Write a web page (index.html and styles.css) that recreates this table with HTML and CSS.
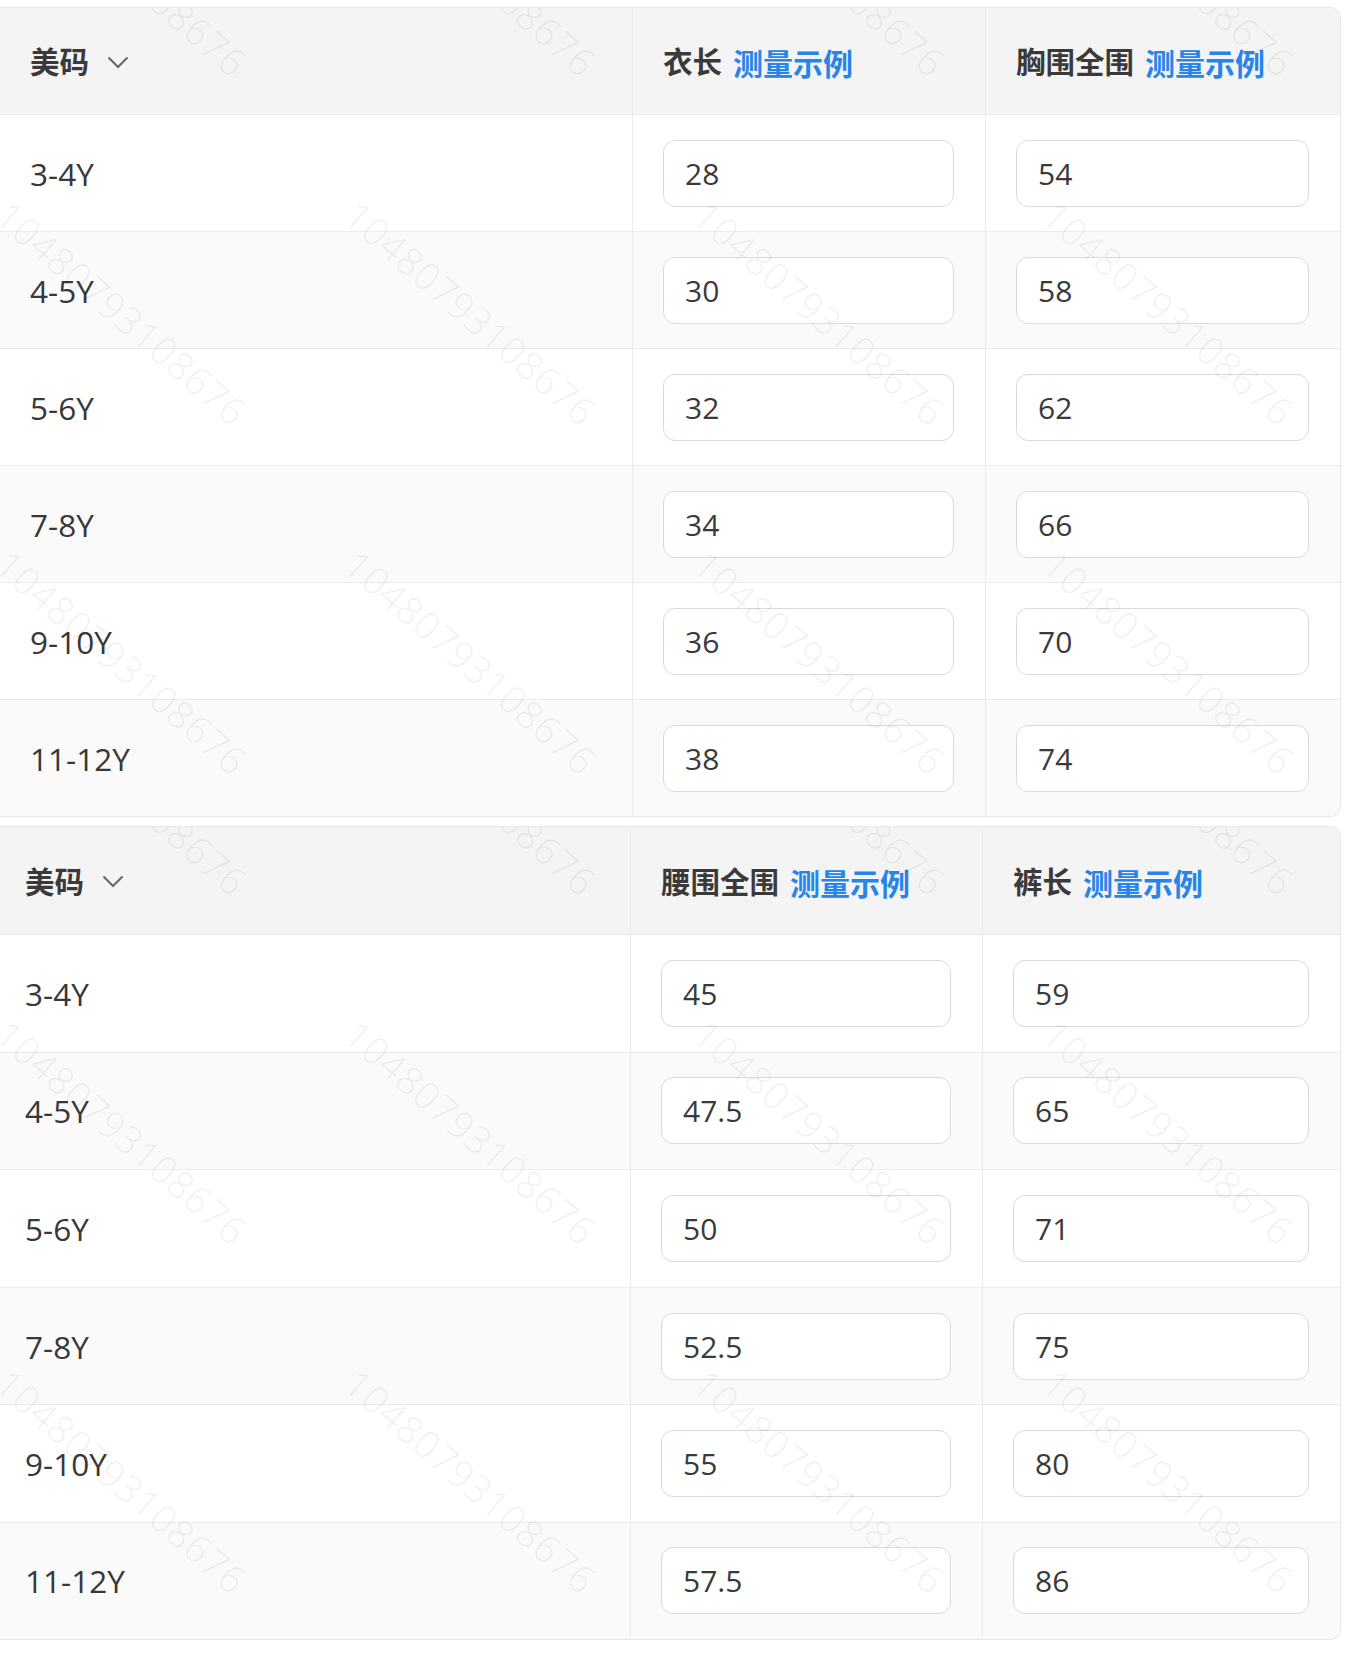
FILE: index.html
```html
<!DOCTYPE html>
<html lang="zh-CN">
<head>
<meta charset="utf-8">
<title>尺码表</title>
<link rel="stylesheet" href="styles.css">
</head>
<body>
<div class="page">

  <section class="sheet sheet-a">
    <div class="tr th">
      <div class="cell label"><span class="hd">美码</span><svg class="chev" viewBox="0 0 22 13" width="22" height="13"><polyline points="1.5,1.5 11,11 20.5,1.5" fill="none" stroke="#666" stroke-width="2"/></svg></div>
      <div class="cell val"><span class="hd">衣长</span><span class="link">测量示例</span></div>
      <div class="cell val"><span class="hd">胸围全围</span><span class="link">测量示例</span></div>
    </div>
    <div class="tr"><div class="cell label">3-4Y</div><div class="cell val"><input class="box" type="text" value="28"></div><div class="cell val"><input class="box" type="text" value="54"></div></div>
    <div class="tr alt"><div class="cell label">4-5Y</div><div class="cell val"><input class="box" type="text" value="30"></div><div class="cell val"><input class="box" type="text" value="58"></div></div>
    <div class="tr"><div class="cell label">5-6Y</div><div class="cell val"><input class="box" type="text" value="32"></div><div class="cell val"><input class="box" type="text" value="62"></div></div>
    <div class="tr alt"><div class="cell label">7-8Y</div><div class="cell val"><input class="box" type="text" value="34"></div><div class="cell val"><input class="box" type="text" value="66"></div></div>
    <div class="tr"><div class="cell label">9-10Y</div><div class="cell val"><input class="box" type="text" value="36"></div><div class="cell val"><input class="box" type="text" value="70"></div></div>
    <div class="tr alt last"><div class="cell label">11-12Y</div><div class="cell val"><input class="box" type="text" value="38"></div><div class="cell val"><input class="box" type="text" value="74"></div></div>

    <div class="wm-layer" aria-hidden="true">
      <span class="wm c1 r0">10480793108676</span><span class="wm c2 r0">10480793108676</span><span class="wm c3 r0">10480793108676</span><span class="wm c4 r0">10480793108676</span>
      <span class="wm c1 r1">10480793108676</span><span class="wm c2 r1">10480793108676</span><span class="wm c3 r1">10480793108676</span><span class="wm c4 r1">10480793108676</span>
      <span class="wm c1 r2">10480793108676</span><span class="wm c2 r2">10480793108676</span><span class="wm c3 r2">10480793108676</span><span class="wm c4 r2">10480793108676</span>
    </div>
  </section>

  <section class="sheet sheet-b">
    <div class="tr th">
      <div class="cell label"><span class="hd">美码</span><svg class="chev" viewBox="0 0 22 13" width="22" height="13"><polyline points="1.5,1.5 11,11 20.5,1.5" fill="none" stroke="#666" stroke-width="2"/></svg></div>
      <div class="cell val"><span class="hd">腰围全围</span><span class="link">测量示例</span></div>
      <div class="cell val"><span class="hd">裤长</span><span class="link">测量示例</span></div>
    </div>
    <div class="tr"><div class="cell label">3-4Y</div><div class="cell val"><input class="box" type="text" value="45"></div><div class="cell val"><input class="box" type="text" value="59"></div></div>
    <div class="tr alt"><div class="cell label">4-5Y</div><div class="cell val"><input class="box" type="text" value="47.5"></div><div class="cell val"><input class="box" type="text" value="65"></div></div>
    <div class="tr"><div class="cell label">5-6Y</div><div class="cell val"><input class="box" type="text" value="50"></div><div class="cell val"><input class="box" type="text" value="71"></div></div>
    <div class="tr alt"><div class="cell label">7-8Y</div><div class="cell val"><input class="box" type="text" value="52.5"></div><div class="cell val"><input class="box" type="text" value="75"></div></div>
    <div class="tr"><div class="cell label">9-10Y</div><div class="cell val"><input class="box" type="text" value="55"></div><div class="cell val"><input class="box" type="text" value="80"></div></div>
    <div class="tr alt last"><div class="cell label">11-12Y</div><div class="cell val"><input class="box" type="text" value="57.5"></div><div class="cell val"><input class="box" type="text" value="86"></div></div>

    <div class="wm-layer" aria-hidden="true">
      <span class="wm c1 r0">10480793108676</span><span class="wm c2 r0">10480793108676</span><span class="wm c3 r0">10480793108676</span><span class="wm c4 r0">10480793108676</span>
      <span class="wm c1 r1">10480793108676</span><span class="wm c2 r1">10480793108676</span><span class="wm c3 r1">10480793108676</span><span class="wm c4 r1">10480793108676</span>
      <span class="wm c1 r2">10480793108676</span><span class="wm c2 r2">10480793108676</span><span class="wm c3 r2">10480793108676</span><span class="wm c4 r2">10480793108676</span>
    </div>
  </section>

</div>
</body>
</html>
```

FILE: styles.css
```css
* { box-sizing: border-box; }

html, body {
  margin: 0;
  padding: 0;
  background: #ffffff;
}

body {
  font-family: "Open Sans", "Noto Sans CJK SC", sans-serif;
  color: #333333;
}

.page {
  width: 1350px;
  padding-top: 7px;
  display: flex;
  flex-direction: column;
  gap: 9px;
}

.sheet {
  position: relative;
  width: 1341px;
  border: 1px solid #e9e9e9;
  border-left: none;
  border-radius: 0 11px 11px 0;
  overflow: hidden;
  background: #ffffff;
}

.tr {
  display: grid;
  grid-template-columns: 632px 353px 1fr;
  height: 117px;
  border-bottom: 1px solid #ebebeb;
  background: #ffffff;
}
.sheet-b .tr { grid-template-columns: 630px 352px 1fr; height: 117.6px; }

.tr.alt { background: #fafafa; }
.tr.last { border-bottom: none; height: 116px; }

.tr.th {
  height: 107px;
  background: #f4f4f4;
}
.sheet-b .tr.th { height: 108px; }

.cell {
  display: flex;
  align-items: center;
  min-width: 0;
}

.cell + .cell { border-left: 1px solid #ebebeb; }

.label {
  padding-left: 30px;
  font-size: 31.5px;
  color: #383838;
}
.sheet-b .label { padding-left: 25px; }

.val {
  padding: 0 31px 0 30px;
}

.hd {
  font-family: "Noto Sans CJK SC", sans-serif;
  font-size: 29.5px;
  font-weight: 700;
  color: #3a3a3a;
  line-height: 1;
}

.link {
  font-family: "Noto Sans CJK SC", sans-serif;
  font-size: 30px;
  font-weight: 700;
  color: #2784ea;
  margin-left: 11px;
  line-height: 1;
  position: relative;
  top: 1px;
}

.chev {
  margin-left: 18px;
  margin-top: 2px;
  flex: none;
}

.box {
  display: block;
  width: 100%;
  height: 67px;
  margin: 0;
  padding: 0 0 0 21px;
  border: 1.5px solid #dadada;
  border-radius: 12px;
  background: #ffffff;
  font-family: "Open Sans", "Noto Sans CJK SC", sans-serif;
  font-size: 30px;
  color: #3a3a3a;
  outline: none;
}

/* watermark overlay */
.wm-layer {
  position: absolute;
  inset: 0;
  overflow: hidden;
  pointer-events: none;
  z-index: 2;
}

.wm {
  position: absolute;
  white-space: nowrap;
  font-family: "Open Sans", sans-serif;
  font-size: 38px;
  font-weight: 300;
  letter-spacing: 1px;
  color: rgba(0, 0, 0, 0.065);
  transform: translate(-50%, -50%) rotate(41deg);
}

.c1 { left: 122px; }
.c2 { left: 471px; }
.c3 { left: 820px; }
.c4 { left: 1169px; }

.r0 { top: -44px; }
.r1 { top: 305px; }
.r2 { top: 654px; }
```
